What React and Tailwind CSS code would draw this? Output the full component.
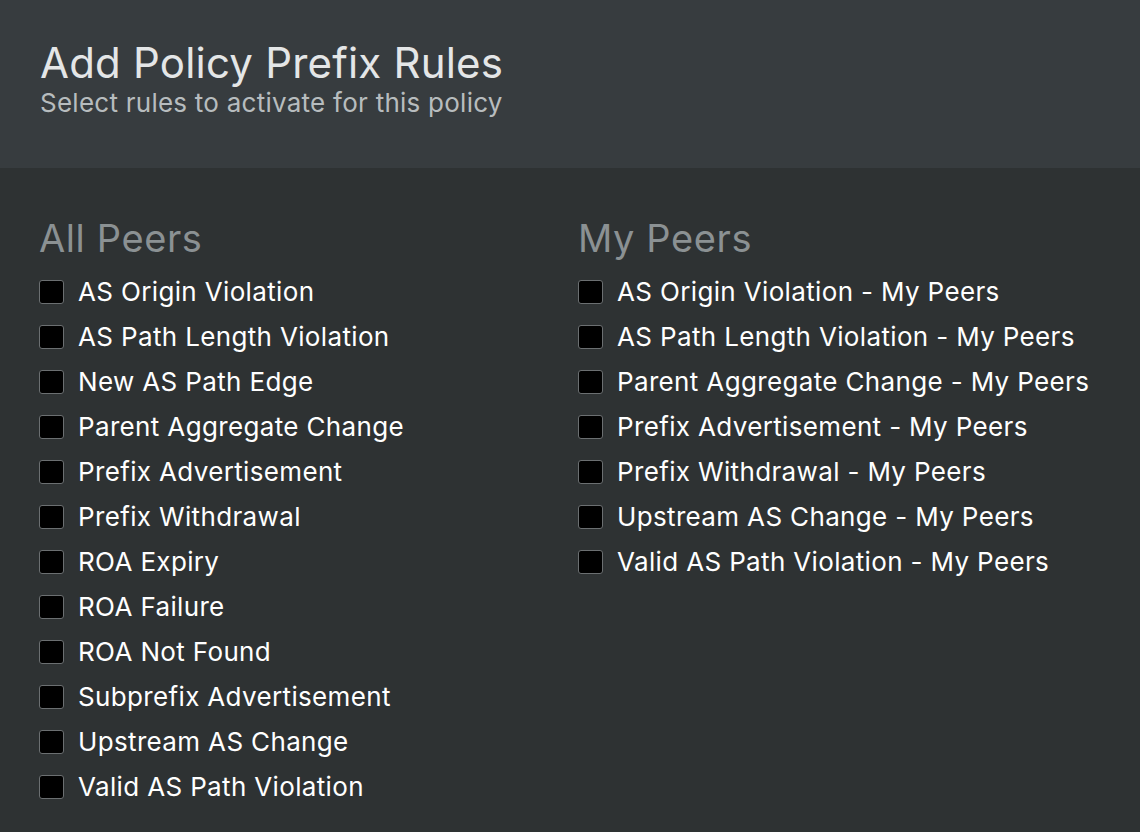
const allPeers = [
  "AS Origin Violation",
  "AS Path Length Violation",
  "New AS Path Edge",
  "Parent Aggregate Change",
  "Prefix Advertisement",
  "Prefix Withdrawal",
  "ROA Expiry",
  "ROA Failure",
  "ROA Not Found",
  "Subprefix Advertisement",
  "Upstream AS Change",
  "Valid AS Path Violation",
];

const myPeers = [
  "AS Origin Violation - My Peers",
  "AS Path Length Violation - My Peers",
  "Parent Aggregate Change - My Peers",
  "Prefix Advertisement - My Peers",
  "Prefix Withdrawal - My Peers",
  "Upstream AS Change - My Peers",
  "Valid AS Path Violation - My Peers",
];

function RuleColumn({ title, rules }) {
  return (
    <div className="flex flex-col">
      <h2 className="text-[38px] leading-[44px] tracking-[0.6px] text-[#8b9193] mb-[9px]">{title}</h2>
      <ul className="flex flex-col">
        {rules.map((r) => (
          <li key={r} className="flex items-center h-[45px]">
            <span className="w-[25px] h-[24px] rounded-[3px] bg-black border border-[#6b6f71] shrink-0" />
            <span className="ml-[14px] text-[26px] tracking-[0.35px] text-white whitespace-nowrap">{r}</span>
          </li>
        ))}
      </ul>
    </div>
  );
}

export default function App() {
  return (
    <div
      className="w-[1140px] h-[832px] bg-[#2e3233] overflow-hidden"
      style={{ fontFamily: "Inter, 'Liberation Sans', sans-serif" }}
    >
      <header className="h-[168px] bg-[#373c3f] px-[40px] pt-[38px]">
        <h1 className="text-[42px] leading-[50px] tracking-[0.2px] text-[#e4e6e7]">Add Policy Prefix Rules</h1>
        <p className="text-[26px] leading-[30px] tracking-[0.25px] text-[#b7bcbe]">Select rules to activate for this policy</p>
      </header>
      <main className="grid grid-cols-[539px_1fr] px-[39px] pt-[48px]">
        <RuleColumn title="All Peers" rules={allPeers} />
        <RuleColumn title="My Peers" rules={myPeers} />
      </main>
    </div>
  );
}
